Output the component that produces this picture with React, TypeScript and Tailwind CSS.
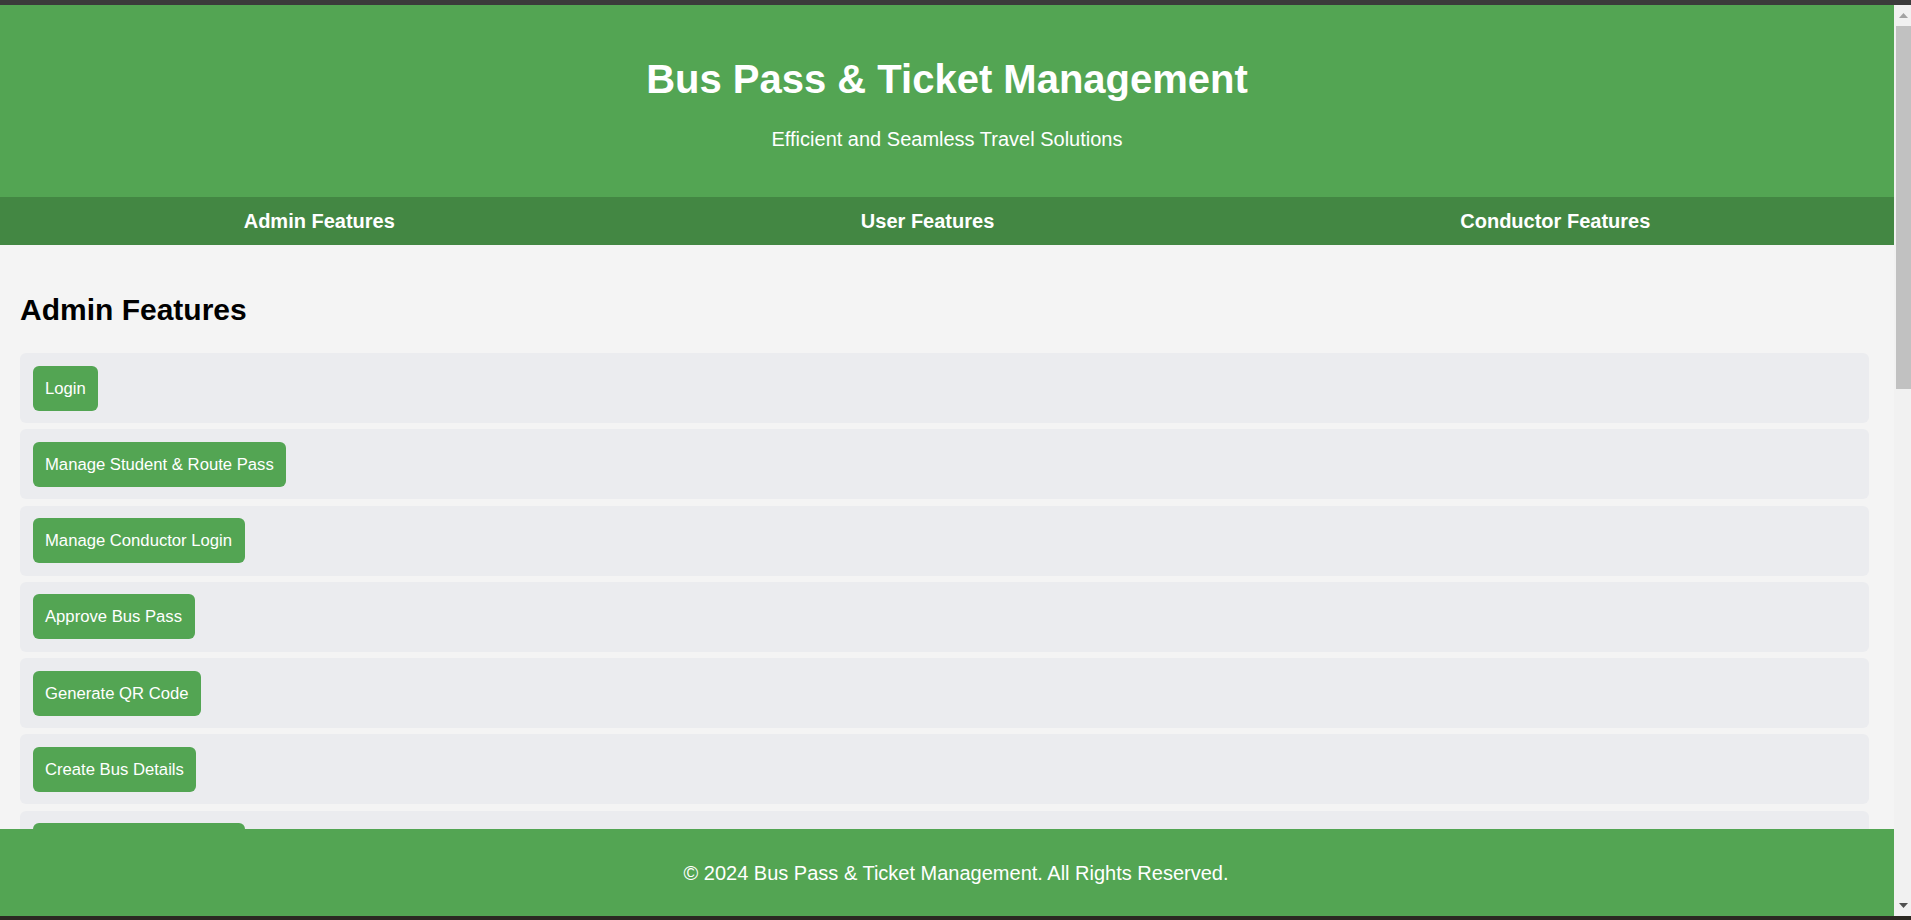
import React from "react";

const items = [
  "Login",
  "Manage Student & Route Pass",
  "Manage Conductor Login",
  "Approve Bus Pass",
  "Generate QR Code",
  "Create Bus Details",
  "Manage Conductor Shifts",
  "View Reports",
];

export default function App() {
  return (
    <div
      className="w-[1911px] h-[920px] flex flex-col overflow-hidden bg-[#f4f4f4]"
      style={{ fontFamily: '"Liberation Sans", Arial, sans-serif' }}
    >
      <div className="h-[5px] shrink-0 bg-[#3b3b3b]" />
      <div className="flex flex-row h-[911px] shrink-0">
        <div className="relative flex-1 overflow-hidden">
          <header className="h-[192px] bg-[#53a553] text-white flex flex-col items-center pt-[51px]">
            <h1 className="text-[40px] leading-[46px] font-bold">Bus Pass &amp; Ticket Management</h1>
            <p className="mt-[26px] text-[20px] leading-[23px]">Efficient and Seamless Travel Solutions</p>
          </header>
          <nav className="h-[48px] bg-[#438743] flex items-center justify-center gap-[466px] text-white font-bold text-[20px]">
            <span>Admin Features</span>
            <span>User Features</span>
            <span>Conductor Features</span>
          </nav>
          <main className="pl-[20px] pr-[25px] pt-[48px]">
            <h2 className="text-[30px] leading-[34.5px] font-bold text-black mb-[25.5px]">Admin Features</h2>
            <div className="flex flex-col gap-[6.3px]">
              {items.map((t) => (
                <div key={t} className="bg-[#ebecef] rounded-[6px] p-[12.5px]">
                  <button className="h-[45px] px-[12.5px] rounded-[6px] bg-[#53a553] text-white text-[16.67px] leading-[19px]">
                    {t}
                  </button>
                </div>
              ))}
            </div>
          </main>
          <footer className="absolute left-0 right-0 bottom-0 h-[87px] pl-[18px] bg-[#53a553] text-white text-[20px] flex items-center justify-center">
            © 2024 Bus Pass &amp; Ticket Management. All Rights Reserved.
          </footer>
        </div>
        <div className="w-[17px] shrink-0 bg-[#f1f1f1] flex flex-col">
          <div className="h-[21px] flex items-center justify-center pl-[2px]">
            <svg width="9" height="5" viewBox="0 0 9 5">
              <polygon points="4.5,0 9,5 0,5" fill="#a3a3a3" />
            </svg>
          </div>
          <div className="h-[363px] ml-[2px] bg-[#c1c1c1]" />
          <div className="flex-1" />
          <div className="h-[21px] flex items-center justify-center pl-[2px]">
            <svg width="9" height="5" viewBox="0 0 9 5">
              <polygon points="0,0 9,0 4.5,5" fill="#505050" />
            </svg>
          </div>
        </div>
      </div>
      <div className="h-[4px] shrink-0 bg-[#2b2822]" />
    </div>
  );
}
